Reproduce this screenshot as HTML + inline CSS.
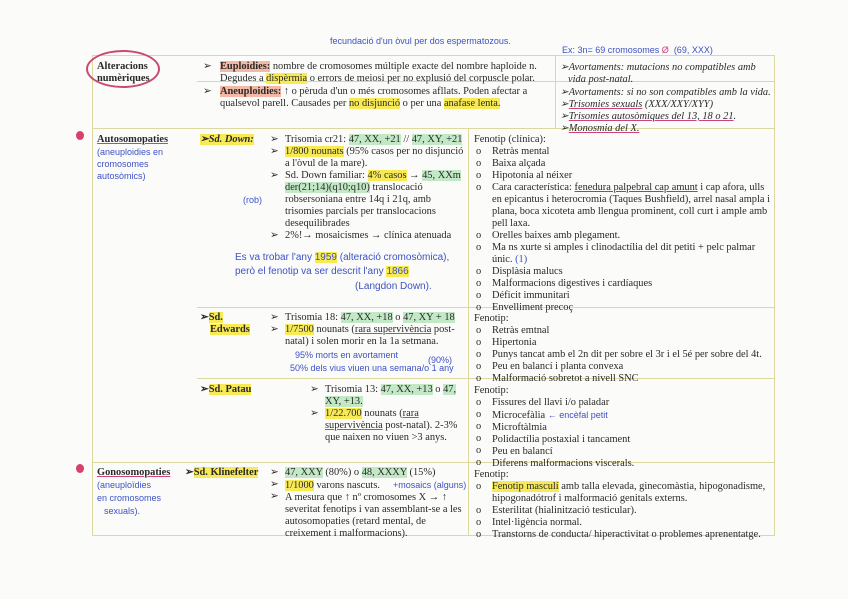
<!DOCTYPE html>
<html><head><meta charset="utf-8"><style>
body{margin:0;width:848px;height:599px;background:#fbfbf9;position:relative;overflow:hidden;font-family:"Liberation Serif",serif;font-size:10.4px;color:#2a2a2a}
.t{position:absolute;white-space:nowrap;line-height:12px}
.h{position:absolute;white-space:nowrap;font-family:"Liberation Sans",sans-serif;font-size:9px;color:#3d52c4;line-height:11px}
.ln{position:absolute;background:#dcd8a0}
.y{background:#f8ea55}.g{background:#c2e8c6}.s{background:#f3b9a6}
b{font-weight:bold}
.r{text-decoration:underline;text-decoration-color:#d0407a}
.bl{text-decoration:underline;text-decoration-color:#4060c8}
</style></head><body>
<div class="ln" style="left:92px;top:55px;width:683px;height:1px"></div>
<div class="ln" style="left:92px;top:535px;width:683px;height:1px"></div>
<div class="ln" style="left:92px;top:55px;width:1px;height:481px"></div>
<div class="ln" style="left:774px;top:55px;width:1px;height:481px"></div>
<div class="ln" style="left:197px;top:81px;width:578px;height:1px"></div>
<div class="ln" style="left:92px;top:128px;width:683px;height:1px"></div>
<div class="ln" style="left:555px;top:55px;width:1px;height:73px"></div>
<div class="ln" style="left:468px;top:128px;width:1px;height:408px"></div>
<div class="ln" style="left:197px;top:307px;width:578px;height:1px"></div>
<div class="ln" style="left:197px;top:378px;width:578px;height:1px"></div>
<div class="ln" style="left:92px;top:462px;width:683px;height:1px"></div>

<div class="t" style="left:97px;top:61px"><b>Alteracions</b></div>
<div class="t" style="left:97px;top:73px"><b>numèriques</b></div>
<div style="position:absolute;left:86px;top:50px;width:70px;height:34px;border:2px solid #c94a72;border-radius:50%"></div>
<div class="h" style="left:330px;top:36px">fecundació d'un òvul per dos espermatozous.</div>
<div class="h" style="left:562px;top:45px">Ex: 3n= 69 cromosomes <span style="color:#d0407a">Ø</span> &nbsp;(69, XXX)</div>
<div class="t" style="left:203px;top:61px">➢</div>
<div class="t" style="left:220px;top:61px"><b class="s">Euploidies:</b> nombre de cromosomes múltiple exacte del nombre haploide n.</div>
<div class="t" style="left:220px;top:73px">Degudes a <span class="y">dispèrmia</span> o errors de meiosi per no explusió del corpuscle polar.</div>
<div class="t" style="left:203px;top:86px">➢</div>
<div class="t" style="left:220px;top:86px"><b class="s">Aneuploidies:</b> ↑ o pèruda d'un o més cromosomes afllats. Poden afectar a</div>
<div class="t" style="left:220px;top:98px">qualsevol parell. Causades per <span class="y">no disjunció</span> o per una <span class="y">anafase lenta.</span></div>
<i class="t" style="left:560px;top:62px">➢Avortaments: mutacions no compatibles amb</i>
<i class="t" style="left:568px;top:74px">vida post-natal.</i>
<i class="t" style="left:560px;top:87px">➢Avortaments: si no son compatibles amb la vida.</i>
<i class="t" style="left:560px;top:99px">➢<span class="r">Trisomies sexuals</span> (XXX/XXY/XYY)</i>
<i class="t" style="left:560px;top:111px">➢<span class="r">Trisomies autosòmiques del 13, 18 o 21</span>.</i>
<i class="t" style="left:560px;top:123px">➢<span class="r">Monosmia del X.</span></i>

<div style="position:absolute;left:76px;top:131px;width:8px;height:9px;background:#d8406a;border-radius:50%"></div>
<div class="t" style="left:97px;top:134px"><b class="r">Autosomopaties</b></div>
<div class="h" style="left:97px;top:147px">(aneuploidies en</div>
<div class="h" style="left:97px;top:159px">cromosomes</div>
<div class="h" style="left:97px;top:171px">autosòmics)</div>
<div class="t" style="left:200px;top:134px"><b><i class="y">➢Sd. Down:</i></b></div>
<div class="t" style="left:270px;top:134px">➢<br>➢<br><br>➢<br><br><br><br><br>➢</div>
<div class="t" style="left:285px;top:134px">Trisomia cr21: <span class="g">47, XX, +21</span> // <span class="g">47, XY, +21</span><br><span class="y">1/800 nounats</span> (95% casos per no disjunció<br>a l'òvul de la mare).<br>Sd. Down familiar: <span class="y">4% casos</span> → <span class="g">45, XXm</span><br><span class="g">der(21;14)(q10;q10)</span> translocació<br>robsersoniana entre 14q i 21q, amb<br>trisomies parcials per translocacions<br>desequilibrades<br>2%!→ mosaicismes → clínica atenuada</div>
<div class="h" style="left:243px;top:195px">(rob)</div>
<div class="h" style="left:235px;top:252px;font-size:10px">Es va trobar l'any <span class="y">1959</span> (alteració cromosòmica),</div>
<div class="h" style="left:235px;top:266px;font-size:10px">però el fenotip va ser descrit l'any <span class="y">1866</span></div>
<div class="h" style="left:355px;top:281px;font-size:10px">(Langdon Down).</div>
<div class="t" style="left:474px;top:134px">Fenotip (clínica):</div>
<div class="t" style="left:476px;top:146px">o<br>o<br>o<br>o<br><br><br><br>o<br>o<br><br>o<br>o<br>o<br>o</div>
<div class="t" style="left:492px;top:146px">Retràs mental<br>Baixa alçada<br>Hipotonia al néixer<br>Cara característica: <span class="bl">fenedura palpebral cap amunt</span> i cap afora, ulls<br>en epicantus i heterocromia (Taques Bushfield), arrel nasal ampla i<br>plana, boca xicoteta amb llengua prominent, coll curt i ample amb<br>pell laxa.<br>Orelles baixes amb plegament.<br>Ma ns xurte si amples i clinodactília del dit petiti + pelc palmar<br>únic. <span style="color:#3d52c4">(1)</span><br>Displàsia malucs<br>Malformacions digestives i cardíaques<br>Déficit immunitari<br>Envelliment precoç</div>

<div class="t" style="left:200px;top:312px"><b>➢<span class="y">Sd.</span></b></div>
<div class="t" style="left:210px;top:324px"><b class="y">Edwards</b></div>
<div class="t" style="left:270px;top:312px">➢<br>➢</div>
<div class="t" style="left:285px;top:312px">Trisomia 18: <span class="g">47, XX, +18</span> o <span class="g">47, XY + 18</span><br><span class="y">1/7500</span> nounats (<span class="r">rara supervivència</span> post-<br>natal) i solen morir en la 1a setmana.</div>
<div class="h" style="left:295px;top:350px">95% morts en avortament</div>
<div class="h" style="left:428px;top:355px">(90%)</div>
<div class="h" style="left:290px;top:363px">50% dels vius viuen una semana/o 1 any</div>
<div class="t" style="left:474px;top:313px">Fenotip:</div>
<div class="t" style="left:476px;top:325px">o<br>o<br>o<br>o<br>o</div>
<div class="t" style="left:492px;top:325px">Retràs emtnal<br>Hipertonia<br>Punys tancat amb el 2n dit per sobre el 3r i el 5é per sobre del 4t.<br>Peu en balancí i planta convexa<br>Malformació sobretot a nivell SNC</div>

<div class="t" style="left:200px;top:384px"><b>➢<span class="y">Sd. Patau</span></b></div>
<div class="t" style="left:310px;top:384px">➢<br><br>➢</div>
<div class="t" style="left:325px;top:384px">Trisomia 13: <span class="g">47, XX, +13</span> o <span class="g">47,</span><br><span class="g">XY, +13.</span><br><span class="y">1/22.700</span> nounats (<span class="r">rara</span><br><span class="r">supervivència</span> post-natal). 2-3%<br>que naixen no viuen &gt;3 anys.</div>
<div class="t" style="left:474px;top:385px">Fenotip:</div>
<div class="t" style="left:476px;top:397px">o<br>o<br>o<br>o<br>o<br>o</div>
<div class="t" style="left:492px;top:397px">Fissures del llavi i/o paladar<br>Microcefàlia <span style="color:#3d52c4;font-family:'Liberation Sans';font-size:9px">← encèfal petit</span><br>Microftàlmia<br>Polidactília postaxial i tancament<br>Peu en balancí<br>Diferens malformacions viscerals.</div>

<div style="position:absolute;left:76px;top:464px;width:8px;height:9px;background:#d8406a;border-radius:50%"></div>
<div class="t" style="left:97px;top:467px"><b class="r">Gonosomopaties</b></div>
<div class="h" style="left:97px;top:480px">(aneuploïdies</div>
<div class="h" style="left:97px;top:493px">en cromosomes</div>
<div class="h" style="left:104px;top:506px">sexuals).</div>
<div class="t" style="left:185px;top:467px"><b>➢<span class="y">Sd. Klinefelter</span></b></div>
<div class="t" style="left:270px;top:467px">➢<br>➢<br>➢</div>
<div class="t" style="left:285px;top:467px"><span class="g">47, XXY</span> (80%) o <span class="g">48, XXXY</span> (15%)<br><span class="y">1/1000</span> varons nascuts. &nbsp;&nbsp;&nbsp;&nbsp;<span style="color:#3d52c4;font-family:'Liberation Sans';font-size:9px">+mosaics (alguns)</span><br>A mesura que ↑ nº cromosomes X → ↑<br>severitat fenotips i van assemblant-se a les<br>autosomopaties (retard mental, de<br>creixement i malformacions).</div>
<div class="t" style="left:474px;top:469px">Fenotip:</div>
<div class="t" style="left:476px;top:481px">o<br><br>o<br>o<br>o</div>
<div class="t" style="left:492px;top:481px"><span class="y">Fenotip masculí</span> amb talla elevada, ginecomàstia, hipogonadisme,<br>hipogonadótrof i malformació genitals externs.<br>Esterilitat (hialinització testicular).<br>Intel·ligència normal.<br>Transtorns de conducta/ hiperactivitat o problemes aprenentatge.</div>
</body></html>
